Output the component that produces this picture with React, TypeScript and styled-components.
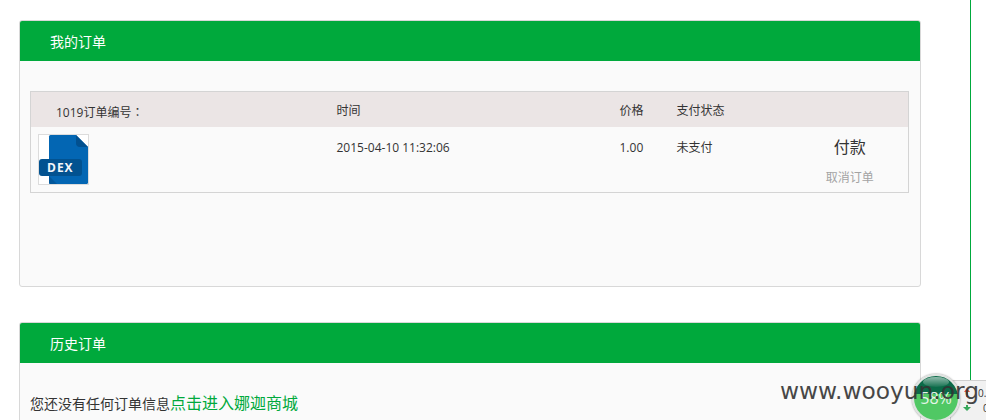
import React from 'react';
import styled, { createGlobalStyle } from 'styled-components';

const GlobalStyle = createGlobalStyle`
  html, body {
    margin: 0;
    padding: 0;
    background: #fff;
    overflow: hidden;
  }
  body {
    font-family: "Open Sans", "Noto Sans CJK SC", sans-serif;
    color: #333;
  }
`;

const green = '#00a93c';

const Page = styled.div`
  position: relative;
  width: 986px;
  height: 420px;
  overflow: hidden;
`;

const Content = styled.div`
  box-sizing: border-box;
  width: 971px;
  height: 420px;
  padding: 20px 0 0 19px;
  border-right: 1px solid ${green};
`;

const Panel = styled.section<{ $height: number }>`
  box-sizing: border-box;
  width: 902px;
  height: ${p => p.$height}px;
  margin-bottom: 35px;
  background: #fafafa;
  border: 1px solid #d8d8d8;
  border-radius: 3px;
  overflow: hidden;
`;

const PanelTitle = styled.h3`
  margin: 0;
  height: 40px;
  padding-left: 30px;
  background: ${green};
  color: #fff;
  font-size: 14px;
  font-weight: 400;
  line-height: 41px;
`;

const PanelBody = styled.div`
  padding: 30px 10px 0;
`;

const OrderTable = styled.table`
  width: 879px;
  border: 1px solid #d4d4d4;
  border-collapse: collapse;
  table-layout: fixed;
  font-size: 12px;
  color: #333;
`;

const HeadCell = styled.th<{ $top?: number; $indent?: number }>`
  box-sizing: border-box;
  height: 35px;
  padding: ${p => p.$top || 2}px 0 0 ${p => p.$indent || 0}px;
  background: #ebe5e5;
  font-weight: 400;
  text-align: left;
`;

const Colon = styled.span`
  font-family: "Noto Sans CJK TC", sans-serif;
`;

const Cell = styled.td`
  box-sizing: border-box;
  height: 66px;
  padding: 13px 0 0;
  vertical-align: top;
  line-height: 16px;
`;

const ThumbCell = styled.td`
  box-sizing: border-box;
  height: 66px;
  padding: 7px 0 0 7px;
  vertical-align: top;
`;

const Thumb = styled.div`
  box-sizing: border-box;
  width: 51px;
  height: 51px;
  border: 1px solid #dcdcdc;
  background: #fff;
`;

const ActionCell = styled.td`
  box-sizing: border-box;
  height: 66px;
  padding: 9px 0 0;
  vertical-align: top;
  text-align: center;
`;

const PayLink = styled.a`
  display: block;
  font-size: 16px;
  line-height: 22px;
  color: #333;
`;

const CancelLink = styled.a`
  display: block;
  margin-top: 12px;
  font-size: 12px;
  line-height: 16px;
  color: #a3a3a3;
`;

const EmptyNote = styled.p`
  margin: 0;
  font-size: 14px;
  line-height: 20px;
  color: #333;
`;

const ShopLink = styled.a`
  font-size: 16px;
  color: ${green};
`;

const Watermark = styled.div`
  position: absolute;
  left: 780px;
  top: 376px;
  font-family: "DejaVu Sans", sans-serif;
  font-size: 23.3px;
  line-height: 30px;
  color: #333;
  opacity: 0.9;
  white-space: nowrap;
  z-index: 3;
`;

const SpeedTab = styled.div`
  position: absolute;
  left: 950px;
  top: 380px;
  width: 50px;
  height: 50px;
  box-sizing: border-box;
  padding: 4px 0 0 12px;
  background: #f1f1f1;
  border: 1px solid #cfcfcf;
  border-radius: 4px 0 0 4px;
  z-index: 1;
`;

const SpeedRow = styled.div<{ $gap: number }>`
  display: flex;
  gap: ${p => p.$gap}px;
  align-items: center;
  height: 15px;
  font-size: 10px;
  color: #333;
`;

const Ball = styled.div`
  position: absolute;
  left: 912px;
  top: 374px;
  width: 48px;
  height: 48px;
  box-sizing: border-box;
  border: 2px solid #dfe3e0;
  border-radius: 50%;
  overflow: hidden;
  background: linear-gradient(#0b6a48 0 42%, #50c864 42% 100%);
  box-shadow: 0 0 2px rgba(0, 0, 0, 0.5);
  z-index: 2;
`;

const BallShine = styled.div`
  position: absolute;
  left: 9px;
  top: 1px;
  width: 26px;
  height: 10px;
  border-radius: 50%;
  background: linear-gradient(rgba(255, 255, 255, 0.55), rgba(255, 255, 255, 0.05));
`;

const BallLabel = styled.div`
  position: absolute;
  left: 0;
  right: 0;
  top: 12px;
  text-align: center;
  font-size: 16px;
  line-height: 20px;
  color: #e6f5e8;
`;

const DexIcon = () => (
  <svg width="49" height="49" viewBox="0 0 49 49" style={{ display: 'block' }}>
    <path d="M10 1.500a1.500 1.500 0 0 1 1.500-1.500H37L49 12V47.500a1.500 1.500 0 0 1-1.500 1.500H11.500A1.500 1.500 0 0 1 10 47.500Z" fill="#0366b3" />
    <path d="M37 0L49 12H41a4 4 0 0 1-4-4Z" fill="#02508f" />
    <path d="M10 41L18 49H11.500A1.500 1.500 0 0 1 10 47.500Z" fill="#02579b" />
    <rect x="0" y="24" width="43" height="17" rx="3" fill="#025290" />
    <text x="8" y="37" fontFamily='"Open Sans", sans-serif' fontSize="12" fontWeight="700" letterSpacing="1" fill="#f2f6fa">DEX</text>
  </svg>
);

const App: React.FC = () => {
  return (
    <Page>
      <GlobalStyle />
      <Content>
        <Panel $height={267}>
          <PanelTitle>我的订单</PanelTitle>
          <PanelBody>
            <OrderTable>
              <colgroup>
                <col style={{ width: 306 }} />
                <col style={{ width: 283 }} />
                <col style={{ width: 57 }} />
                <col style={{ width: 115 }} />
                <col />
              </colgroup>
              <thead>
                <tr>
                  <HeadCell $top={6} $indent={25}>1019订单编号<Colon>：</Colon></HeadCell>
                  <HeadCell>时间</HeadCell>
                  <HeadCell>价格</HeadCell>
                  <HeadCell>支付状态</HeadCell>
                  <HeadCell />
                </tr>
              </thead>
              <tbody>
                <tr>
                  <ThumbCell>
                    <Thumb>
                      <DexIcon />
                    </Thumb>
                  </ThumbCell>
                  <Cell>2015-04-10 11:32:06</Cell>
                  <Cell>1.00</Cell>
                  <Cell>未支付</Cell>
                  <ActionCell>
                    <PayLink>付款</PayLink>
                    <CancelLink>取消订单</CancelLink>
                  </ActionCell>
                </tr>
              </tbody>
            </OrderTable>
          </PanelBody>
        </Panel>
        <Panel $height={120}>
          <PanelTitle>历史订单</PanelTitle>
          <PanelBody>
            <EmptyNote>
              您还没有任何订单信息<ShopLink>点击进入娜迦商城</ShopLink>
            </EmptyNote>
          </PanelBody>
        </Panel>
      </Content>
      <SpeedTab>
        <SpeedRow $gap={7}>
          <svg width="8" height="9" viewBox="0 0 8 9"><path d="M4 0L7 4H5V9H3V4H1Z" fill="#e0533d" /></svg>
          <span>0.</span>
        </SpeedRow>
        <SpeedRow $gap={12}>
          <svg width="8" height="6" viewBox="0 0 8 6"><path d="M4 6L8 2H5V0H3V2H0Z" fill="#38a85a" /></svg>
          <span>0</span>
        </SpeedRow>
      </SpeedTab>
      <Ball>
        <BallShine />
        <BallLabel>58%</BallLabel>
      </Ball>
      <Watermark>www.wooyun.org</Watermark>
    </Page>
  );
};

export default App;
